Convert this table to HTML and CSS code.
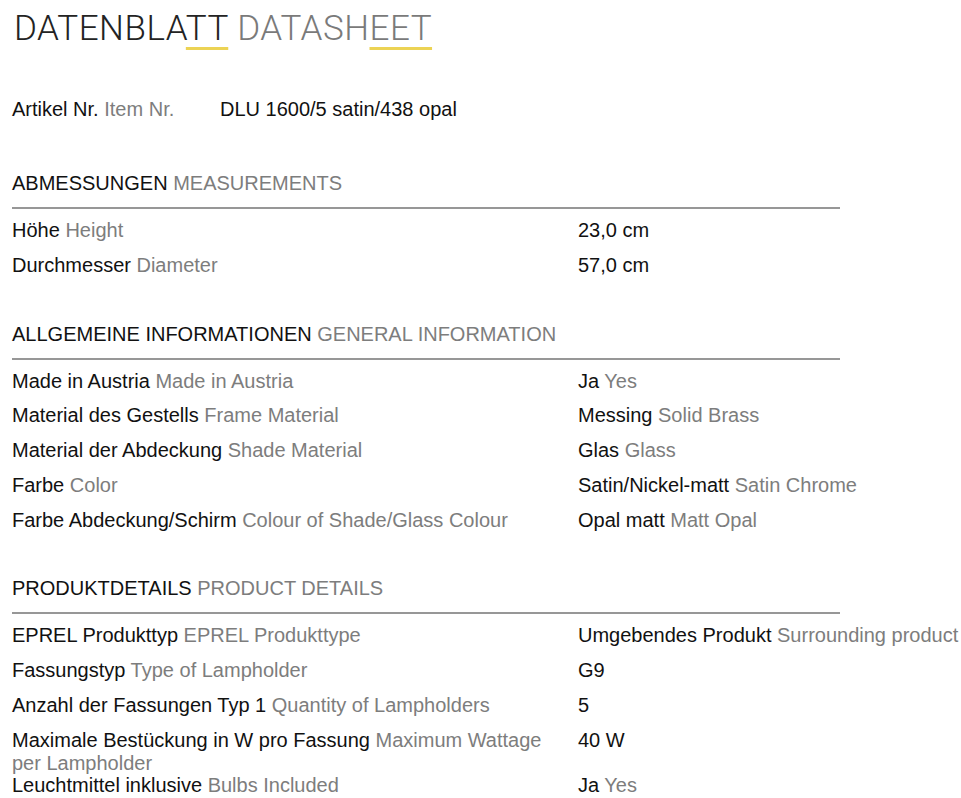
FILE: index.html
```html
<!DOCTYPE html>
<html lang="de">
<head>
<meta charset="utf-8">
<title>Datenblatt Datasheet</title>
<link rel="stylesheet" href="styles.css">
</head>
<body>
<div class="page">
  <h1 class="title"><span class="de">DATENBLA<span class="mark">TT</span></span> <span class="en">DATASH<span class="mark">EET</span></span></h1>

  <div class="article">
    <div class="label">Artikel Nr. <span class="en">Item Nr.</span></div>
    <div class="value">DLU 1600/5 satin/438 opal</div>
  </div>

  <section class="section">
    <h2 class="heading">ABMESSUNGEN <span class="en">MEASUREMENTS</span></h2>
    <div class="rows">
      <div class="row"><div class="label">Höhe <span class="en">Height</span></div><div class="value">23,0 cm</div></div>
      <div class="row"><div class="label">Durchmesser <span class="en">Diameter</span></div><div class="value">57,0 cm</div></div>
    </div>
  </section>

  <section class="section">
    <h2 class="heading">ALLGEMEINE INFORMATIONEN <span class="en">GENERAL INFORMATION</span></h2>
    <div class="rows">
      <div class="row"><div class="label">Made in Austria <span class="en">Made in Austria</span></div><div class="value">Ja <span class="en">Yes</span></div></div>
      <div class="row"><div class="label">Material des Gestells <span class="en">Frame Material</span></div><div class="value">Messing <span class="en">Solid Brass</span></div></div>
      <div class="row"><div class="label">Material der Abdeckung <span class="en">Shade Material</span></div><div class="value">Glas <span class="en">Glass</span></div></div>
      <div class="row"><div class="label">Farbe <span class="en">Color</span></div><div class="value">Satin/Nickel-matt <span class="en">Satin Chrome</span></div></div>
      <div class="row"><div class="label">Farbe Abdeckung/Schirm <span class="en">Colour of Shade/Glass Colour</span></div><div class="value">Opal matt <span class="en">Matt Opal</span></div></div>
    </div>
  </section>

  <section class="section">
    <h2 class="heading">PRODUKTDETAILS <span class="en">PRODUCT DETAILS</span></h2>
    <div class="rows">
      <div class="row"><div class="label">EPREL Produkttyp <span class="en">EPREL Produkttype</span></div><div class="value">Umgebendes Produkt <span class="en">Surrounding product</span></div></div>
      <div class="row"><div class="label">Fassungstyp <span class="en">Type of Lampholder</span></div><div class="value">G9</div></div>
      <div class="row"><div class="label">Anzahl der Fassungen Typ 1 <span class="en">Quantity of Lampholders</span></div><div class="value">5</div></div>
      <div class="row row-tight"><div class="label">Maximale Bestückung in W pro Fassung <span class="en">Maximum Wattage</span> <span class="en">per Lampholder</span></div><div class="value">40 W</div></div>
      <div class="row"><div class="label">Leuchtmittel inklusive <span class="en">Bulbs Included</span></div><div class="value">Ja <span class="en">Yes</span></div></div>
    </div>
  </section>
</div>
</body>
</html>
```
FILE: styles.css
```css
html, body {
  margin: 0;
  padding: 0;
  background: #ffffff;
}

body {
  font-family: "Liberation Sans", Arial, sans-serif;
  font-size: 20px;
  color: #111111;
  overflow: hidden;
}

.page {
  width: 828px;
  padding: 0 0 0 12px;
}

.en {
  color: #7d7d7d;
}

.title {
  margin: 0;
  padding: 9px 0 0 2px;
  font-family: Roboto, "Liberation Sans", sans-serif;
  font-weight: 300;
  font-size: 35px;
  line-height: 40px;
  letter-spacing: 0.5px;
  color: #232323;
  white-space: nowrap;
}

.title .en {
  color: #7a7a7a;
}

.mark {
  text-decoration: underline;
  text-decoration-color: #ecd354;
  text-decoration-thickness: 3px;
  text-underline-offset: 7px;
}

.article {
  display: grid;
  grid-template-columns: 208px auto;
  margin-top: 49px;
  line-height: 23px;
}

.section {
  margin-top: 51px;
}

.section + .section {
  margin-top: 40px;
}

.heading {
  margin: 0;
  font-size: 20px;
  font-weight: normal;
  line-height: 23px;
  padding-bottom: 12px;
  border-bottom: 2px solid #979797;
}

.rows {
  padding-top: 4px;
}

.row {
  display: grid;
  grid-template-columns: 566px auto;
  line-height: 23px;
  padding: 6px 0 5.75px;
}

.row-tight {
  padding: 6px 0 0;
  margin-bottom: -7px;
}

.label {
  padding-right: 10px;
}

.value {
  white-space: nowrap;
}
```
